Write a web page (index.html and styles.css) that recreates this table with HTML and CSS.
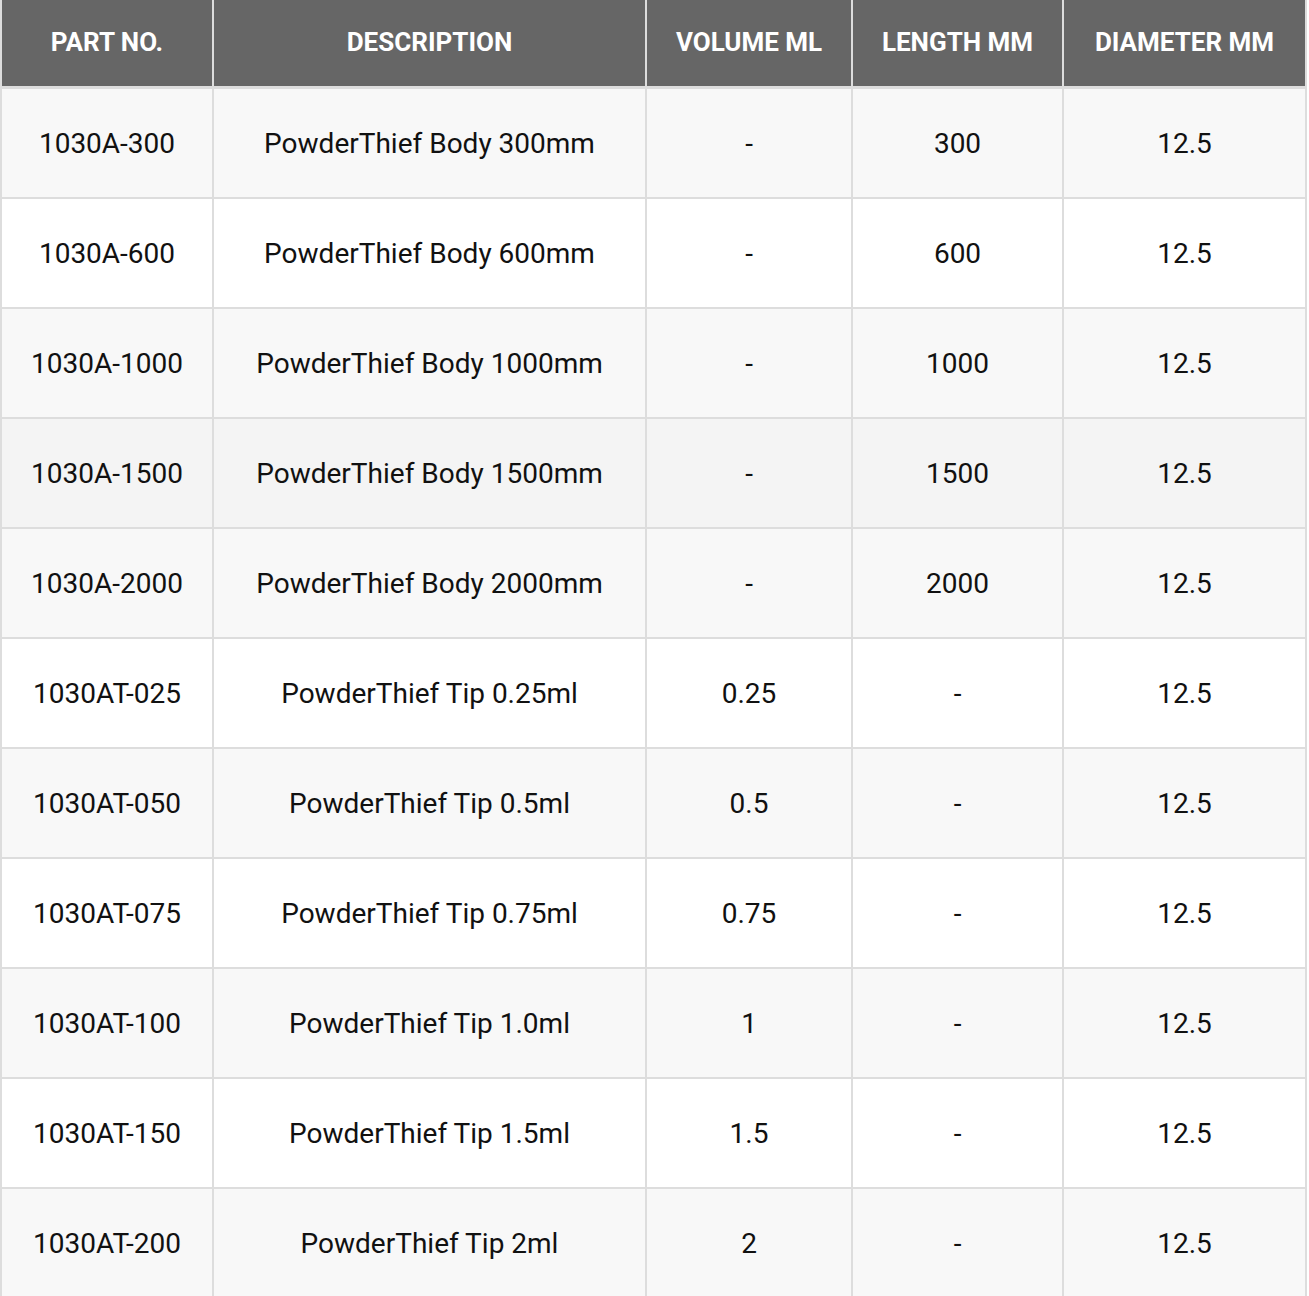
FILE: index.html
```html
<!DOCTYPE html>
<html>
<head>
<meta charset="utf-8">
<link rel="stylesheet" href="styles.css">
</head>
<body>
<table class="spec">
  <colgroup>
    <col class="c1"><col class="c2"><col class="c3"><col class="c4"><col class="c5">
  </colgroup>
  <thead>
    <tr><th>Part No.</th><th>Description</th><th>Volume ml</th><th>Length mm</th><th>Diameter mm</th></tr>
  </thead>
  <tbody>
    <tr><td>1030A-300</td><td>PowderThief Body 300mm</td><td>-</td><td>300</td><td>12.5</td></tr>
    <tr><td>1030A-600</td><td>PowderThief Body 600mm</td><td>-</td><td>600</td><td>12.5</td></tr>
    <tr><td>1030A-1000</td><td>PowderThief Body 1000mm</td><td>-</td><td>1000</td><td>12.5</td></tr>
    <tr class="hover"><td>1030A-1500</td><td>PowderThief Body 1500mm</td><td>-</td><td>1500</td><td>12.5</td></tr>
    <tr><td>1030A-2000</td><td>PowderThief Body 2000mm</td><td>-</td><td>2000</td><td>12.5</td></tr>
    <tr><td>1030AT-025</td><td>PowderThief Tip 0.25ml</td><td>0.25</td><td>-</td><td>12.5</td></tr>
    <tr><td>1030AT-050</td><td>PowderThief Tip 0.5ml</td><td>0.5</td><td>-</td><td>12.5</td></tr>
    <tr><td>1030AT-075</td><td>PowderThief Tip 0.75ml</td><td>0.75</td><td>-</td><td>12.5</td></tr>
    <tr><td>1030AT-100</td><td>PowderThief Tip 1.0ml</td><td>1</td><td>-</td><td>12.5</td></tr>
    <tr><td>1030AT-150</td><td>PowderThief Tip 1.5ml</td><td>1.5</td><td>-</td><td>12.5</td></tr>
    <tr><td>1030AT-200</td><td>PowderThief Tip 2ml</td><td>2</td><td>-</td><td>12.5</td></tr>
  </tbody>
</table>
</body>
</html>
```
FILE: styles.css
```css
html, body {
  margin: 0;
  padding: 0;
  background: #ffffff;
}
body {
  font-family: Roboto, "Liberation Sans", Arial, sans-serif;
  overflow: hidden;
}
.spec {
  border-collapse: collapse;
  table-layout: fixed;
  width: 1305px;
  color: #111;
}
.c1 { width: 212px; }
.c2 { width: 433px; }
.c3 { width: 206px; }
.c4 { width: 211px; }
.c5 { width: 243px; }
.spec th {
  background: #666666;
  color: #ffffff;
  font-weight: 700;
  font-size: 26px;
  text-transform: uppercase;
  height: 84px;
  padding: 0 0 2px 0;
  border-left: 2px solid #dddddd;
  border-right: 2px solid #dddddd;
  border-bottom: 3px solid #dddddd;
  text-align: center;
  vertical-align: middle;
}
.spec td {
  font-size: 28px;
  height: 108px;
  padding: 0;
  text-align: center;
  vertical-align: middle;
  border: 2px solid #dddddd;
}
.spec tbody tr:nth-child(odd) td { background: #f8f8f8; }
.spec tbody tr:nth-child(even) td { background: #ffffff; }
.spec tbody tr.hover td { background: #f4f4f4; }
```
